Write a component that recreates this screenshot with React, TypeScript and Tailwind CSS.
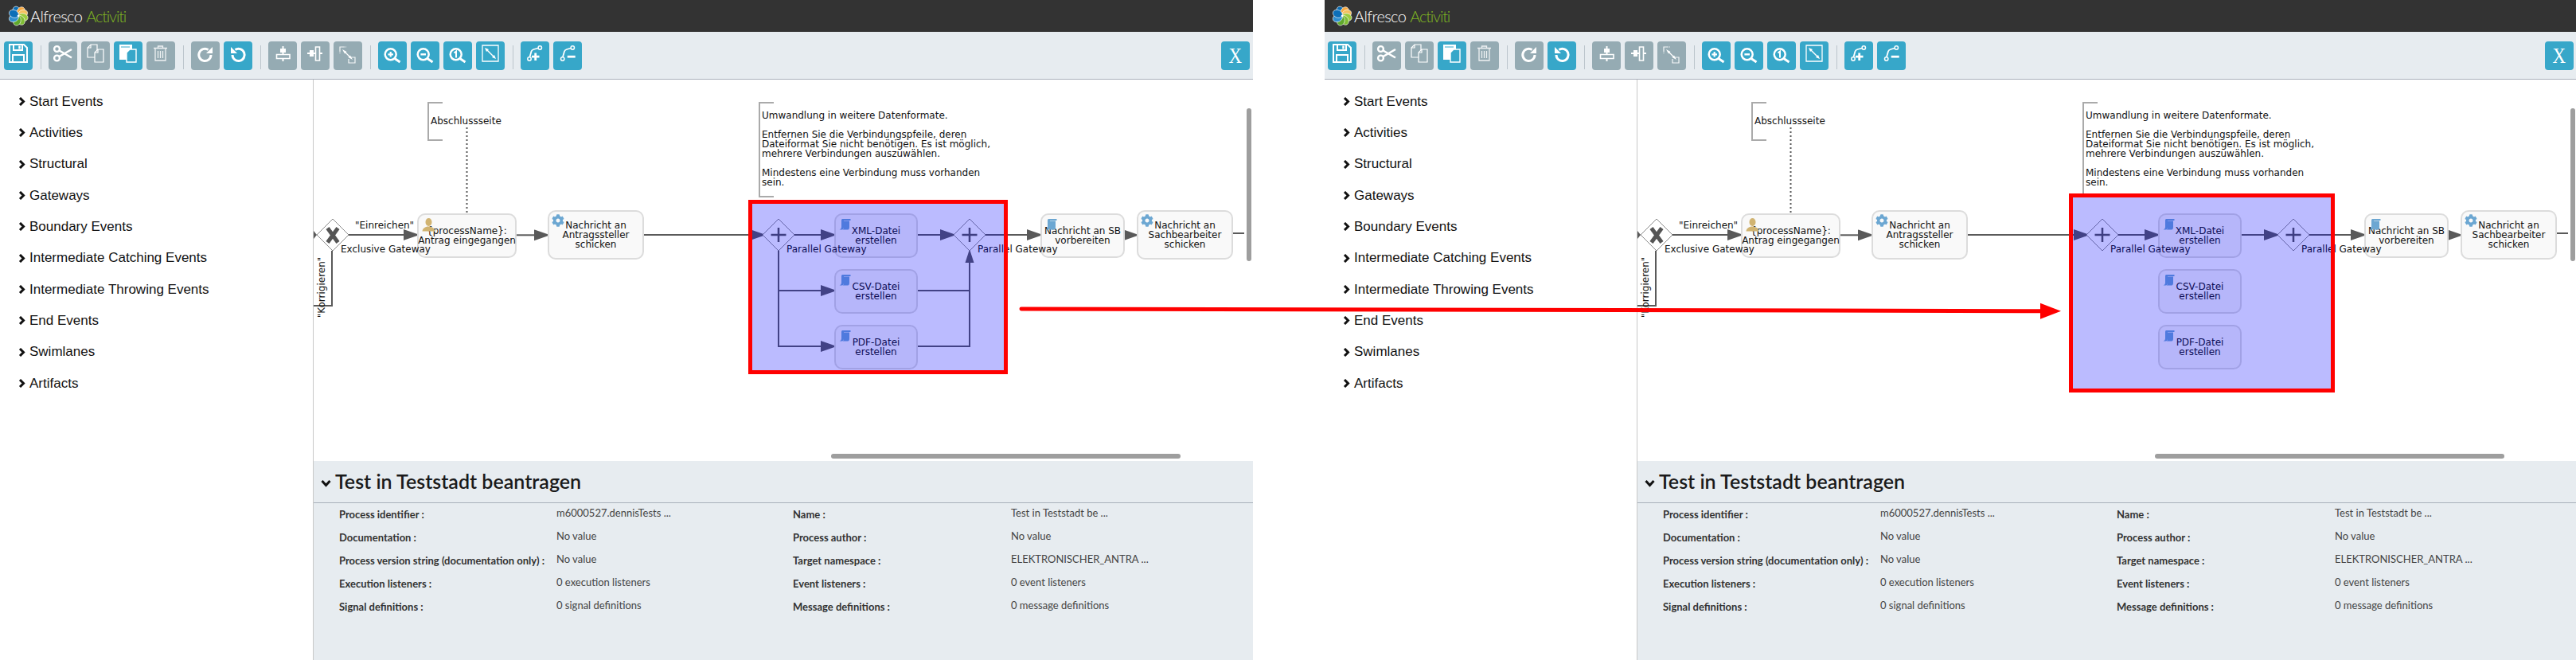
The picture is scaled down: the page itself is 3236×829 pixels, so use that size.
import type { ReactNode } from "react";
import { FaCog } from "react-icons/fa";
import clsx from "clsx";

const LINE = "#5a5a5a";

const paletteGroups = [
  "Start Events",
  "Activities",
  "Structural",
  "Gateways",
  "Boundary Events",
  "Intermediate Catching Events",
  "Intermediate Throwing Events",
  "End Events",
  "Swimlanes",
  "Artifacts",
];

const properties = [
  ["Process identifier :", "m6000527.dennisTests ...", "Name :", "Test in Teststadt be ..."],
  ["Documentation :", "No value", "Process author :", "No value"],
  ["Process version string (documentation only) :", "No value", "Target namespace :", "ELEKTRONISCHER_ANTRA ..."],
  ["Execution listeners :", "0 execution listeners", "Event listeners :", "0 event listeners"],
  ["Signal definitions :", "0 signal definitions", "Message definitions :", "0 message definitions"],
];

function Glyph({ children }: { children: ReactNode }) {
  return (
    <svg viewBox="0 0 36 36" className="size-9" fill="none" stroke="white" strokeWidth="2">
      {children}
    </svg>
  );
}

const icons = {
  save: (
    <Glyph>
      <path d="M7 4H25L29 8V26H7Z" />
      <path d="M12 4V11H23V4" />
      <path d="M19.5 5.5V9.5" strokeWidth="2.5" />
      <path d="M11 26V17H25V26" />
    </Glyph>
  ),
  cut: (
    <Glyph>
      <circle cx="10.5" cy="9.5" r="3.4" strokeWidth="2.4" />
      <circle cx="10.5" cy="21" r="3.4" strokeWidth="2.4" />
      <path d="M13.5 11.5L29 20.5M13.5 19L29 10" strokeWidth="2.6" />
    </Glyph>
  ),
  copy: (
    <Glyph>
      <g strokeWidth="1.2">
        <path d="M12 4H20V20H8V8Z" />
        <path d="M12 4V8H8" />
        <path d="M21 10H28V26H17V14Z" fill="#95abb3" />
        <path d="M21 10V14H17" />
      </g>
    </Glyph>
  ),
  paste: (
    <Glyph>
      <path d="M7 4H23V23H7Z" fill="white" stroke="none" />
      <path d="M9 7H20" stroke="#37a7c9" strokeWidth="1" />
      <path d="M20 10H28V26H16V14Z" fill="#37a7c9" strokeWidth="1.4" />
    </Glyph>
  ),
  trash: (
    <Glyph>
      <g strokeWidth="1.3" opacity="0.85">
        <path d="M9 8.5H26M14.5 8V6H20.5V8" />
        <path d="M11 9V24H24V9" />
        <path d="M14.5 12V21M17.5 12V21M20.5 12V21" />
      </g>
    </Glyph>
  ),
  redo: (
    <Glyph>
      <path d="M25 17a7.6 7.6 0 1 1-3.4-6.4" strokeWidth="3" />
      <path d="M27 7V15H19Z" fill="white" stroke="none" />
    </Glyph>
  ),
  undo: (
    <Glyph>
      <path d="M11 17a7.6 7.6 0 1 0 3.4-6.4" strokeWidth="3" />
      <path d="M9 7V15H17Z" fill="white" stroke="none" />
    </Glyph>
  ),
  alignCenter: (
    <Glyph>
      <path d="M18.5 6V25" strokeWidth="2" />
      <path d="M15 9H22V14H15Z" fill="white" stroke="none" />
      <path d="M10.5 16.5H27V21.5H10.5Z" fill="#95abb3" strokeWidth="1.6" />
    </Glyph>
  ),
  alignMiddle: (
    <Glyph>
      <path d="M8 15H27" strokeWidth="2" />
      <path d="M11 11H16V19H11Z" fill="white" stroke="none" />
      <path d="M18.5 7H23.5V24H18.5Z" fill="#95abb3" strokeWidth="1.6" />
    </Glyph>
  ),
  sameSize: (
    <Glyph>
      <g strokeWidth="1.2" opacity="0.9">
        <path d="M14 7H8V13" />
        <path d="M8 14V15M15 7H16" />
        <path d="M20 20H27V27H19V22" />
      </g>
      <path d="M11 10L14 15.5L16.5 13Z" fill="white" stroke="none" />
      <path d="M24 23L18.5 20L21 17.5Z" fill="white" stroke="none" />
      <path d="M15 14L20 19" strokeWidth="1.2" />
    </Glyph>
  ),
  zoomIn: (
    <Glyph>
      <circle cx="15.7" cy="16.3" r="7" strokeWidth="2.5" />
      <path d="M20.8 21.5L27.5 26" strokeWidth="3" />
      <path d="M15.7 13V19.6M12.4 16.3H19" strokeWidth="2.2" />
    </Glyph>
  ),
  zoomOut: (
    <Glyph>
      <circle cx="15.7" cy="16.3" r="7" strokeWidth="2.5" />
      <path d="M20.8 21.5L27.5 26" strokeWidth="3" />
      <path d="M12.4 16.3H19" strokeWidth="2.4" />
    </Glyph>
  ),
  zoomActual: (
    <Glyph>
      <circle cx="15.7" cy="16.3" r="7" strokeWidth="2.5" />
      <path d="M20.8 21.5L27.5 26" strokeWidth="3" />
      <path d="M13.5 14.5L16 12.5V20.5" strokeWidth="2" />
    </Glyph>
  ),
  fit: (
    <Glyph>
      <path d="M8 5H28V25H8Z" strokeWidth="1.3" />
      <path d="M11 8L16 10L13 13Z M25 22L20 20L23 17Z" fill="white" stroke="none" />
      <path d="M14 11L22 19" strokeWidth="1.5" />
    </Glyph>
  ),
  bendAdd: (
    <Glyph>
      <circle cx="24.3" cy="8" r="2.2" strokeWidth="1.5" />
      <circle cx="11" cy="22" r="2.2" strokeWidth="1.5" />
      <path d="M11.5 19.5L13.5 12.5C14 11 15 10.5 16.5 10L22 8.5" strokeWidth="1.8" />
      <path d="M18.7 14.5V24M14 19.2H23.5" strokeWidth="2.8" />
    </Glyph>
  ),
  bendRemove: (
    <Glyph>
      <circle cx="24.3" cy="8" r="2.2" strokeWidth="1.5" />
      <circle cx="11.7" cy="22" r="2.2" strokeWidth="1.5" />
      <path d="M12 19.5L14 12.5C14.5 11 15.5 10.5 17 10L22 8.5" strokeWidth="1.8" />
      <path d="M17.7 19.2H27.7" strokeWidth="2.8" />
    </Glyph>
  ),
};

type IconName = keyof typeof icons;

const toolbarGroups: [IconName, boolean][][] = [
  [["save", true]],
  [["cut", false], ["copy", false], ["paste", true], ["trash", false]],
  [["redo", false], ["undo", true]],
  [["alignCenter", false], ["alignMiddle", false], ["sameSize", false]],
  [["zoomIn", true], ["zoomOut", true], ["zoomActual", true], ["fit", true]],
  [["bendAdd", true], ["bendRemove", true]],
];

function ToolButton({ active, children }: { active: boolean; children: ReactNode }) {
  return (
    <div className={clsx("size-9 shrink-0 rounded-[4px]", active ? "bg-[#37a7c9]" : "bg-[#95abb3]")}>
      {children}
    </div>
  );
}

function Logo() {
  const petals = [
    ["#0b6db5", -20],
    ["#f7a941", 30],
    ["#f4c05f", 65],
    ["#9ccb3f", 105],
    ["#7fbc34", 150],
    ["#5fa82c", 195],
    ["#2f8fd0", 245],
    ["#0d6fb8", 295],
  ] as const;
  return (
    <svg viewBox="0 0 26 26" className="h-[26px] w-[26px]">
      {petals.map(([color, angle]) => (
        <ellipse
          key={angle}
          cx="13"
          cy="6.8"
          rx="4.8"
          ry="6.2"
          fill={color}
          stroke="white"
          strokeWidth="0.6"
          transform={`rotate(${angle} 13 13)`}
        />
      ))}
      <circle cx="13" cy="13" r="1.3" fill="white" />
    </svg>
  );
}

function Chevron() {
  return (
    <svg viewBox="0 0 9 11" className="h-[11px] w-[9px] shrink-0" fill="none" stroke="#111" strokeWidth="3">
      <path d="M2 1L6.5 5.5L2 10" />
    </svg>
  );
}

function UserMark() {
  return (
    <svg viewBox="0 0 17 17" className="absolute left-[4px] top-[4px] h-[17px] w-[17px]" fill="#d1b472">
      <ellipse cx="8.5" cy="5" rx="4" ry="5" />
      <path d="M0.5 16.5C1 12.5 4 11.5 6.5 10.5H10.5C13 11.5 16 12.5 16.5 16.5Z" />
    </svg>
  );
}

function ScriptMark() {
  return (
    <svg viewBox="0 0 15 15" className="absolute left-[4px] top-[4px] h-[15px] w-[15px]">
      <path d="M3 3C3 1 4 1 5 1H14.5V3H6V11.5C6 13.5 5 14.5 3.5 14.5H0.5C2 14 3 13 3 11Z" fill="#6ca7d2" />
      <path d="M6 3.5H13V11C13 13 12.5 14.5 11 14.5H4.5C5.5 14 6 13 6 11.5Z" fill="#6ca7d2" />
    </svg>
  );
}

function Task({ className, icon, lines }: { className: string; icon: "user" | "gear" | "script"; lines: string[] }) {
  return (
    <div
      className={clsx(
        "absolute flex flex-col items-center justify-center rounded-[10px] border-2 border-[#dcdcdc] bg-[#f9f9f9] text-center",
        className,
      )}
    >
      {icon === "user" && <UserMark />}
      {icon === "script" && <ScriptMark />}
      {icon === "gear" && <FaCog className="absolute left-[3px] top-[3px] text-[16px] text-[#6ca7d2]" />}
      {lines.map((line) => (
        <span key={line} className="whitespace-nowrap">
          {line}
        </span>
      ))}
    </div>
  );
}

function Arrow({ x, y }: { x: number; y: number }) {
  return <polygon points={`${x - 16},${y - 5.5} ${x},${y} ${x - 16},${y + 5.5}`} fill={LINE} />;
}

function Diamond({ x, children }: { x: number; children: ReactNode }) {
  return (
    <g>
      <polygon
        points={`${x},175 ${x + 20},195 ${x},215 ${x - 20},195`}
        fill="white"
        stroke="#8a8a8a"
        strokeWidth="1"
      />
      {children}
    </g>
  );
}

function Diagram({ corrected }: { corrected: boolean }) {
  return (
    <div className="relative min-h-0 flex-1 overflow-hidden text-[12px] leading-[12px] text-[#111] [font-family:'DejaVu_Sans',sans-serif]">
      <svg className="absolute inset-0 h-full w-full" fill="none" stroke={LINE} strokeWidth="2">
        <polygon points="0,190 4,195 0,200" fill={LINE} stroke="none" />
        <path d="M44 195H115" />
        <Arrow x={130} y={195} />
        <path d="M23 215V284H0" />
        <path d="M192.5 60V167" strokeDasharray="2 3" />
        <path d="M254 195.3H279" />
        <Arrow x={294} y={195.3} />
        <path d="M415 195H552" />
        <Arrow x={565} y={195} />
        <path d="M604 195H640" />
        <Arrow x={654} y={195} />
        <path d="M759 195H790" />
        <Arrow x={804} y={195} />
        <path d="M844 195H899" />
        <Arrow x={913} y={195} />
        <path d="M1019 195.3H1020" />
        <Arrow x={1034} y={195.3} />
        <path d="M1155 193H1169" />
        {!corrected && (
          <>
            <path d="M584 215V335H640" />
            <path d="M584 265H640" />
            <Arrow x={654} y={265} />
            <Arrow x={654} y={335} />
            <path d="M759 265H824" />
            <path d="M759 335H824V228" />
            <polygon points="824,213 818.5,230 829.5,230" fill={LINE} stroke="none" />
          </>
        )}
      </svg>

      <Task className="left-[130px] top-[168px] h-[56px] w-[125px]" icon="user" lines={["{processName}:", "Antrag eingegangen"]} />
      <Task className="left-[294px] top-[164px] h-[62px] w-[121px]" icon="gear" lines={["Nachricht an", "Antragssteller", "schicken"]} />
      <Task className="left-[654px] top-[168px] h-[56px] w-[105px]" icon="script" lines={["XML-Datei", "erstellen"]} />
      <Task className="left-[654px] top-[238px] h-[56px] w-[105px]" icon="script" lines={["CSV-Datei", "erstellen"]} />
      <Task className="left-[654px] top-[308px] h-[56px] w-[105px]" icon="script" lines={["PDF-Datei", "erstellen"]} />
      <Task className="left-[913px] top-[168px] h-[56px] w-[106px]" icon="script" lines={["Nachricht an SB", "vorbereiten"]} />
      <Task className="left-[1034px] top-[164px] h-[62px] w-[121px]" icon="gear" lines={["Nachricht an", "Sachbearbeiter", "schicken"]} />

      <svg className="absolute inset-0 h-full w-full" fill="none">
        <Diamond x={24}>
          <path d="M17.5 186.5L30.5 204.5M30.5 186.5L17.5 204.5" stroke="#555" strokeWidth="5" />
        </Diamond>
        <Diamond x={584}>
          <path d="M584 186V204M574.5 195H593.5" stroke="#555" strokeWidth="2.5" />
        </Diamond>
        <Diamond x={824}>
          <path d="M824 186V204M814.5 195H833.5" stroke="#555" strokeWidth="2.5" />
        </Diamond>
      </svg>

      <div className="absolute left-[143px] top-[28px] h-[49px] w-[19px] border-2 border-r-0 border-[#aaaaaa]" />
      <div className="absolute left-[147px] top-[46px] whitespace-nowrap">Abschlussseite</div>
      <div className="absolute left-[559px] top-[28px] h-[120px] w-[19px] border-2 border-r-0 border-[#aaaaaa]" />
      <div className="absolute left-[563px] top-[39px] whitespace-pre">
        {"Umwandlung in weitere Datenformate.\n\nEntfernen Sie die Verbindungspfeile, deren\nDateiformat Sie nicht benötigen. Es ist möglich,\nmehrere Verbindungen auszuwählen.\n\nMindestens eine Verbindung muss vorhanden\nsein."}
      </div>

      <div className="absolute left-[52px] top-[177px] whitespace-nowrap">"Einreichen"</div>
      <div className="absolute left-[34px] top-[207px] whitespace-nowrap">Exclusive Gateway</div>
      <div className="absolute left-[594px] top-[207px] whitespace-nowrap">Parallel Gateway</div>
      <div className="absolute left-[834px] top-[207px] whitespace-nowrap">Parallel Gateway</div>
      <div className="absolute left-[-30px] top-[255px] w-[80px] -rotate-90 whitespace-nowrap text-center">"Korrigieren"</div>

      <div
        className={clsx(
          "absolute border-[5px] border-[#ff0000] bg-[rgba(0,0,255,0.265)]",
          corrected
            ? "left-[542px] top-[143px] h-[250px] w-[334px]"
            : "left-[546px] top-[151px] h-[219px] w-[326px]",
        )}
      />

      {/* scrollbars */}
      <div className="absolute left-[1172px] top-[36px] h-[192px] w-[6px] rounded-[3px] bg-[#9e9e9e]" />
      <div className="absolute left-[650px] top-[470px] h-[6px] w-[439px] rounded-[3px] bg-[#9e9e9e]" />
    </div>
  );
}

function DetailsPanel() {
  return (
    <div className="h-[250px] shrink-0 bg-[#e7ecf0] [font-family:Lato,sans-serif]">
      <div className="flex h-[53px] items-center gap-[5px] border-b border-[#a9b0ba] pl-[9px] pb-px">
        <svg viewBox="0 0 13 10" className="mt-[4px] h-[10px] w-[13px]" fill="none" stroke="#111" strokeWidth="3">
          <path d="M1.5 2L6.5 7.5L11.5 2" />
        </svg>
        <h2 className="text-[25px] font-semibold leading-none text-[#1a1a1a]">Test in Teststadt beantragen</h2>
      </div>
      <div className="grid grid-cols-[273px_297px_274px_1fr] pl-[32px] text-[13px]">
        {properties.map((row, r) =>
          row.map((text, i) => (
            <div key={`${r}-${i}`} className="flex h-[29px] items-center">
              {i % 2 === 0 ? (
                <span className="font-bold whitespace-nowrap text-[#333]">{text}</span>
              ) : (
                <span className="pb-1 whitespace-nowrap text-[#444]">{text}</span>
              )}
            </div>
          )),
        )}
      </div>
    </div>
  );
}

function EditorPanel({ corrected }: { corrected: boolean }) {
  return (
    <div className={clsx("flex h-full shrink-0 flex-col", corrected ? "w-[1572px]" : "w-[1574px]")}>
      <header
        className={clsx(
          "flex h-[40px] shrink-0 items-center bg-[#333333] [font-family:Lato,sans-serif] text-[20px] font-light",
          corrected ? "pl-[9px]" : "pl-[10px]",
        )}
      >
        <Logo />
        <span className="ml-[2px] tracking-[-0.6px] text-white">Alfresco</span>
        <span className="ml-[5px] tracking-[-1.2px] text-[#7fb522]">Activiti</span>
      </header>

      <div
        className={clsx(
          "flex h-[60px] shrink-0 items-start border-b border-[#a9b0ba] bg-[#e7ecf0] pt-[12px]",
          corrected ? "pl-[4px] pr-[3px]" : "pl-[5px] pr-[4px]",
        )}
      >
        {toolbarGroups.map((group, i) => (
          <div key={i} className="flex items-start">
            {i > 0 && <div className="ml-[10px] mr-[9px] mt-[5px] h-[30px] w-px bg-[#bcc5cc]" />}
            <div className="flex gap-[5px]">
              {group.map(([name, active]) => (
                <ToolButton key={name} active={active}>
                  {icons[name]}
                </ToolButton>
              ))}
            </div>
          </div>
        ))}
        <div className="ml-auto flex size-9 items-center justify-center rounded-[4px] bg-[#37a7c9] text-white">
          <span className="scale-x-[.85] text-[27px] leading-none [font-family:'Liberation_Serif',serif]">X</span>
        </div>
      </div>

      <div className="flex min-h-0 flex-1">
        <aside
          className={clsx(
            "shrink-0 border-r border-[#c8c8c8] pt-[8px] pl-[23px] [font-family:'Liberation_Sans',sans-serif] text-[17px] text-[#111]",
            corrected ? "w-[393px]" : "w-[394px]",
          )}
        >
          {paletteGroups.map((label) => (
            <div key={label} className="flex h-[39.3px] items-center gap-[5px]">
              <Chevron />
              {label}
            </div>
          ))}
        </aside>
        <main className="flex min-w-0 flex-1 flex-col">
          <Diagram corrected={corrected} />
          <DetailsPanel />
        </main>
      </div>
    </div>
  );
}

export default function App() {
  return (
    <div className="relative flex h-[829px] w-[3236px] justify-between overflow-hidden bg-white">
      <EditorPanel corrected={false} />
      <EditorPanel corrected />
      {/* red arrow between the two states */}
      <svg className="absolute left-[1280px] top-[375px] h-[30px] w-[1312px]" fill="none">
        <path d="M3 13L1285 15.7" stroke="#ff0000" strokeWidth="5" strokeLinecap="round" />
        <polygon points="1283,5.7 1309,15.7 1283,25.7" fill="#ff0000" />
      </svg>
    </div>
  );
}
